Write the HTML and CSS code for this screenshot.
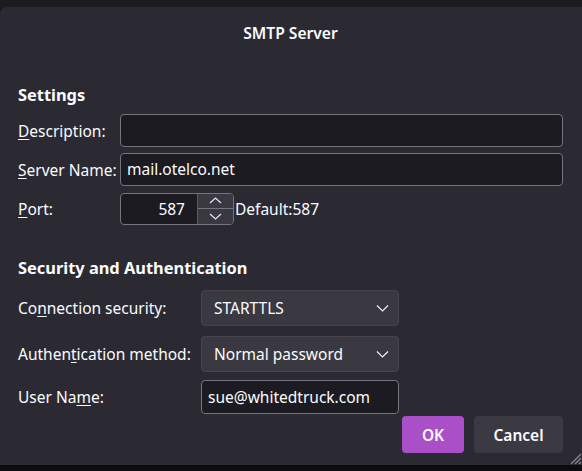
FILE: index.html
```html
<!DOCTYPE html>
<html>
<head>
<meta charset="utf-8">
<link rel="stylesheet" href="styles.css">
</head>
<body>
<div class="topstrip"></div>
<div class="dialog">
  <h1 class="title">SMTP Server</h1>
  <section class="settings">
    <h2 class="heading">Settings</h2>
    <div class="row">
      <label class="label lab1"><u>D</u>escription:</label>
      <div class="textbox grow"></div>
    </div>
    <div class="row">
      <label class="label lab1"><u>S</u>erver Name:</label>
      <div class="textbox grow">mail.otelco.net</div>
    </div>
    <div class="row">
      <label class="label lab1"><u>P</u>ort:</label>
      <div class="number">
        <span class="numval">587</span>
        <span class="spin">
          <span class="spinbtn"><svg width="13" height="7" viewBox="0 0 13 7"><path d="M1 6 L6.5 1 L12 6" fill="none" stroke="#e6e6ea" stroke-width="1.2"/></svg></span>
          <span class="spinbtn"><svg width="13" height="7" viewBox="0 0 13 7"><path d="M1 1 L6.5 6 L12 1" fill="none" stroke="#e6e6ea" stroke-width="1.2"/></svg></span>
        </span>
      </div>
      <span class="default">Default:587</span>
    </div>
  </section>
  <section class="security">
    <h2 class="heading">Security and Authentication</h2>
    <div class="row srow">
      <label class="label lab2">Co<u>n</u>nection security:</label>
      <div class="select">STARTTLS<svg class="chev" width="13" height="8" viewBox="0 0 13 8"><path d="M1 1.5 L6.5 7 L12 1.5" fill="none" stroke="#f0f0f4" stroke-width="1.2"/></svg></div>
    </div>
    <div class="row srow">
      <label class="label lab2">Authen<u>t</u>ication method:</label>
      <div class="select">Normal password<svg class="chev" width="13" height="8" viewBox="0 0 13 8"><path d="M1 1.5 L6.5 7 L12 1.5" fill="none" stroke="#f0f0f4" stroke-width="1.2"/></svg></div>
    </div>
    <div class="row urow">
      <label class="label lab2">User Na<u>m</u>e:</label>
      <div class="textbox user">sue@whitedtruck.com</div>
    </div>
  </section>
  <div class="buttons">
    <button class="btn ok">OK</button>
    <button class="btn cancel">Cancel</button>
  </div>
  <svg class="grip" width="14" height="14" viewBox="0 0 14 14"><path d="M13 3 L3 13 M13 7 L7 13 M13 11 L11 13" stroke="#8a8992" stroke-width="1.2"/></svg>
</div>
<div class="bottomstrip"></div>
</body>
</html>
```

FILE: styles.css
```css
html, body {
  margin: 0;
  padding: 0;
}
body {
  width: 582px;
  height: 471px;
  overflow: hidden;
  background: #1c1b20;
  font-family: "Noto Sans", "Open Sans", sans-serif;
  font-size: 15.5px;
  color: #fbfbfe;
}
.topstrip {
  height: 7px;
  background: #1c1b20;
}
.dialog {
  position: relative;
  height: 458px;
  background: #2b2a33;
  border-radius: 7px 0 0 0;
  box-sizing: border-box;
  padding: 0 19px 0 18px;
}
.bottomstrip {
  height: 6px;
  background: #0c0c0e;
}
.title {
  margin: 0;
  padding-top: 14px;
  height: 40px;
  box-sizing: border-box;
  text-align: center;
  font-size: 15.6px;
  font-weight: 600;
  line-height: 24px;
}
.heading {
  margin: 0;
  font-size: 16.4px;
  font-weight: 700;
  line-height: 22px;
}
.settings {
  padding-top: 37px;
}
.settings .heading {
  margin-bottom: 8px;
}
.row {
  display: flex;
  align-items: center;
}
.settings .row {
  margin-bottom: 6px;
  height: 33px;
}
.label {
  flex: none;
}
.label u {
  text-decoration-thickness: 1px;
  text-underline-offset: 2px;
}
.lab1 {
  width: 102px;
}
.lab2 {
  width: 183px;
}
.textbox {
  box-sizing: border-box;
  height: 33px;
  border: 1px solid #75747c;
  border-radius: 4px;
  background: #1c1b22;
  padding: 0 6px;
  line-height: 31px;
  white-space: nowrap;
}
.grow {
  flex: 1;
}
.number {
  box-sizing: border-box;
  width: 114px;
  height: 32px;
  border: 1px solid #75747c;
  border-radius: 4px;
  background: #1c1b22;
  display: flex;
  overflow: hidden;
}
.numval {
  flex: 1;
  text-align: right;
  padding-right: 12px;
  line-height: 30px;
}
.spin {
  width: 35px;
  display: flex;
  flex-direction: column;
  background: #3a3941;
  border-left: 1px solid #5b5a62;
}
.spinbtn {
  flex: 1;
  display: flex;
  align-items: center;
  justify-content: center;
}
.spinbtn + .spinbtn {
  border-top: 1px solid #75747c;
}
.default {
  margin-left: 1px;
}
.security {
  padding-top: 26px;
}
.security .heading {
  margin-bottom: 11px;
}
.srow {
  height: 36px;
  margin-bottom: 10px;
}
.srow + .srow {
  margin-bottom: 8px;
}
.select {
  box-sizing: border-box;
  width: 198px;
  height: 36px;
  border: 1px solid #46454d;
  border-radius: 4px;
  background: #3a3941;
  padding: 0 9px 0 12px;
  display: flex;
  align-items: center;
  justify-content: space-between;
}
.chev {
  flex: none;
}
.urow {
  height: 34px;
}
.user {
  width: 198px;
  height: 34px;
  line-height: 32px;
}
.buttons {
  display: flex;
  justify-content: flex-end;
  gap: 10px;
  margin-top: 2px;
}
.btn {
  height: 37px;
  border: none;
  border-radius: 4px;
  font-family: inherit;
  font-size: 15.5px;
  font-weight: 600;
  color: #fbfbfe;
  padding: 0;
}
.ok {
  width: 62px;
  background: #aa4fc8;
}
.cancel {
  width: 89px;
  background: #3b3a42;
}
.grip {
  position: absolute;
  right: 0;
  bottom: 0;
}
```
